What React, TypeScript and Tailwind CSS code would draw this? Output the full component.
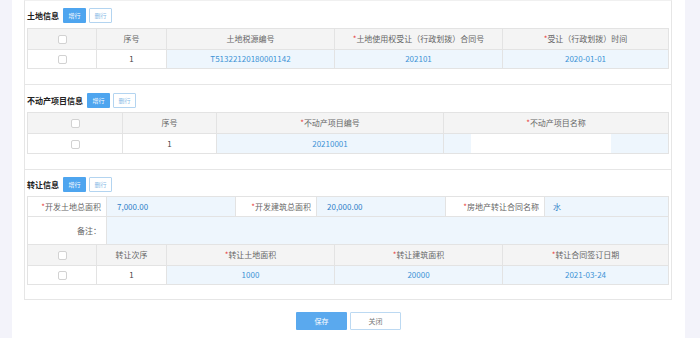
import React from "react";

const Req = () => <span className="text-[#e8413b]">*</span>;

const Checkbox = () => (
  <span className="inline-block w-[9px] h-[9px] border border-[#d2d2d2] rounded-[2px] bg-white align-middle" />
);

const SectionHeader = ({ title }: { title: string }) => (
  <div className="flex items-center h-[15px] gap-[3px]">
    <span className="text-[8px] font-bold text-[#222] leading-none mr-[1px]">{title}</span>
    <span className="w-[23px] h-[15px] bg-[#4ea5ef] text-white text-[6px] flex items-center justify-center rounded-[1px]">增行</span>
    <span className="w-[23px] h-[15px] bg-white border border-[#b3d4f0] text-[#8bbbe6] text-[6px] flex items-center justify-center rounded-[1px]">删行</span>
  </div>
);

const th = "border border-[#e3e3e3] bg-[#f4f4f4] text-[#666] font-normal text-center h-[21px] p-0";
const td = "border border-[#e3e3e3] text-center h-[19px] p-0";
const tdBlue = "border border-[#e3e3e3] text-center h-[19px] p-0 bg-[#eef6fd] text-[#3d93d6]";

export default function App() {
  return (
    <div className="w-[700px] h-[338px] flex bg-white font-['Noto_Sans_CJK_SC','Noto_Sans',sans-serif] text-[8px] text-[#444] overflow-hidden">
      <div className="w-[12px] bg-[#f3f3fa]" />
      <div className="w-[673px] flex flex-col">
        <div className="ml-[12px] w-[648px] border border-[#e6e6e6] border-t-[#f0f0f0]">
          {/* Section 1 */}
          <div className="px-[2px] pt-[7px] pb-[15px] border-b border-[#e6e6e6]">
            <SectionHeader title="土地信息" />
            <table className="mt-[5px] w-[642px] table-fixed border-collapse">
              <colgroup>
                <col className="w-[69px]" />
                <col className="w-[70px]" />
                <col className="w-[168px]" />
                <col className="w-[168px]" />
                <col />
              </colgroup>
              <thead>
                <tr>
                  <th className={th}><Checkbox /></th>
                  <th className={th}>序号</th>
                  <th className={th}>土地税源编号</th>
                  <th className={th}><Req />土地使用权受让（行政划拨）合同号</th>
                  <th className={th}><Req />受让（行政划拨）时间</th>
                </tr>
              </thead>
              <tbody>
                <tr>
                  <td className={td}><Checkbox /></td>
                  <td className={td}>1</td>
                  <td className={tdBlue}>T51322120180001142</td>
                  <td className={tdBlue}>202101</td>
                  <td className={tdBlue}>2020-01-01</td>
                </tr>
              </tbody>
            </table>
          </div>

          {/* Section 2 */}
          <div className="px-[2px] pt-[8px] pb-[15px] border-b border-[#e6e6e6]">
            <SectionHeader title="不动产项目信息" />
            <table className="mt-[4px] w-[642px] table-fixed border-collapse">
              <colgroup>
                <col className="w-[95px]" />
                <col className="w-[94px]" />
                <col className="w-[227px]" />
                <col />
              </colgroup>
              <thead>
                <tr>
                  <th className={th}><Checkbox /></th>
                  <th className={th}>序号</th>
                  <th className={th}><Req />不动产项目编号</th>
                  <th className={th}><Req />不动产项目名称</th>
                </tr>
              </thead>
              <tbody>
                <tr>
                  <td className={td}><Checkbox /></td>
                  <td className={td}>1</td>
                  <td className={tdBlue}>20210001</td>
                  <td className={tdBlue}>
                    <div className="flex h-[19px]">
                      <div className="w-[27px]" />
                      <div className="w-[140px] bg-white" />
                      <div className="flex-1" />
                    </div>
                  </td>
                </tr>
              </tbody>
            </table>
          </div>

          {/* Section 3 */}
          <div className="px-[2px] pt-[7px] pb-[14px]">
            <SectionHeader title="转让信息" />
            <table className="mt-[4px] w-[642px] table-fixed border-collapse">
              <colgroup>
                <col className="w-[79px]" />
                <col className="w-[129px]" />
                <col className="w-[81px]" />
                <col className="w-[129px]" />
                <col className="w-[99px]" />
                <col />
              </colgroup>
              <tbody>
                <tr>
                  <td className="border border-[#e3e3e3] h-[20px] p-0 pr-[5px] text-right text-[#666]"><Req />开发土地总面积</td>
                  <td className="border border-[#e3e3e3] h-[20px] p-0 pl-[10px] bg-[#eef6fd] text-[#2f7fc8]">7,000.00</td>
                  <td className="border border-[#e3e3e3] h-[20px] p-0 pr-[5px] text-right text-[#666]"><Req />开发建筑总面积</td>
                  <td className="border border-[#e3e3e3] h-[20px] p-0 pl-[10px] bg-[#eef6fd] text-[#2f7fc8]">20,000.00</td>
                  <td className="border border-[#e3e3e3] h-[20px] p-0 pr-[5px] text-right text-[#666]"><Req />房地产转让合同名称</td>
                  <td className="border border-[#e3e3e3] h-[20px] p-0 pl-[8px] bg-[#eef6fd] text-[#2f7fc8]">水</td>
                </tr>
                <tr>
                  <td className="border border-[#e3e3e3] h-[28px] p-0 pr-[5px] text-right text-[#666]">备注：</td>
                  <td colSpan={5} className="border border-[#e3e3e3] h-[28px] p-0 bg-[#eef6fd]" />
                </tr>
              </tbody>
            </table>
            <table className="w-[642px] table-fixed border-collapse -mt-[1px]">
              <colgroup>
                <col className="w-[69px]" />
                <col className="w-[70px]" />
                <col className="w-[168px]" />
                <col className="w-[168px]" />
                <col />
              </colgroup>
              <thead>
                <tr>
                  <th className={th}><Checkbox /></th>
                  <th className={th}>转让次序</th>
                  <th className={th}><Req />转让土地面积</th>
                  <th className={th}><Req />转让建筑面积</th>
                  <th className={th}><Req />转让合同签订日期</th>
                </tr>
              </thead>
              <tbody>
                <tr>
                  <td className={td}><Checkbox /></td>
                  <td className={td}>1</td>
                  <td className={tdBlue}>1000</td>
                  <td className={tdBlue}>20000</td>
                  <td className={tdBlue}>2021-03-24</td>
                </tr>
              </tbody>
            </table>
          </div>
        </div>

        <div className="flex justify-center gap-[3px] mt-[12px]">
          <span className="w-[51px] h-[18px] bg-[#5aa9ee] text-white text-[7px] flex items-center justify-center rounded-[1px]">保存</span>
          <span className="w-[51px] h-[18px] bg-white border border-[#bcd9f2] text-[#777] text-[7px] flex items-center justify-center rounded-[1px]">关闭</span>
        </div>
      </div>
      <div className="flex-1 bg-[#f3f3fa]" />
    </div>
  );
}
